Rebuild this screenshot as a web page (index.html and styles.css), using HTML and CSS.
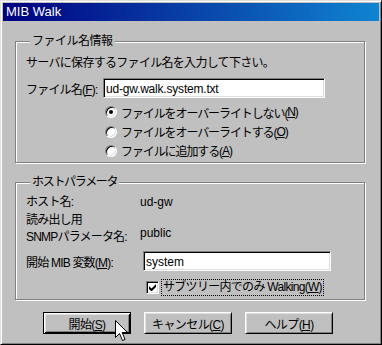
FILE: index.html
```html
<!DOCTYPE html>
<html lang="ja">
<head>
    <meta charset="UTF-8">
    <title>MIB Walk</title>
    <link rel="stylesheet" href="styles.css">
</head>
<body>
    <div class="window">
        <div class="titlebar">MIB Walk</div>
        <div class="dialog">
            <fieldset class="group group-file">
                <legend>ファイル名情報</legend>
                <div class="line">サーバに保存するファイル名を入力して下さい。</div>
                <div class="field">
                    <span class="field-label">ファイル名(<u>F</u>):</span>
                    <div class="textbox tb-file">ud-gw.walk.system.txt</div>
                </div>
                <div class="options">
                    <div class="option"><span class="radio checked"></span>ファイルをオーバーライトしない(<u>N</u>)</div>
                    <div class="option"><span class="radio"></span>ファイルをオーバーライトする(<u>O</u>)</div>
                    <div class="option"><span class="radio"></span>ファイルに追加する(<u>A</u>)</div>
                </div>
            </fieldset>

            <fieldset class="group group-host">
                <legend>ホストパラメータ</legend>
                <div class="info-row">
                    <span class="info-label">ホスト名:</span>
                    <span class="info-value">ud-gw</span>
                </div>
                <div class="info-row two-line">
                    <span class="info-label">読み出し用<br>SNMPパラメータ名:</span>
                    <span class="info-value">public</span>
                </div>
                <div class="field field-mib">
                    <span class="field-label">開始 MIB 変数(<u>M</u>):</span>
                    <div class="textbox tb-mib">system</div>
                </div>
                <div class="check-row">
                    <span class="checkbox">
                        <svg viewBox="0 0 7 7" width="7" height="7"><path d="M0 2v3l2 2h1l4-4V0L2.5 4.5z" fill="#000"/></svg>
                    </span>
                    <span class="focus">サブツリー内でのみ Walking(<u>W</u>)</span>
                </div>
            </fieldset>

            <div class="buttons">
                <div class="btn btn-default">
                    <span>開始(<u>S</u>)</span>
                    <svg class="cursor" viewBox="0 0 13 21" width="13" height="21">
                        <path d="M0.5 0.5V17.5L4.5 13.5L7.5 20.5L10 19.5L7.2 12.5H12.5Z" fill="#fff" stroke="#000" stroke-width="1"/>
                    </svg>
                </div>
                <div class="btn"><span>キャンセル(<u>C</u>)</span></div>
                <div class="btn"><span>ヘルプ(<u>H</u>)</span></div>
            </div>
        </div>
    </div>
</body>
</html>
```

FILE: styles.css
```css
:root {
    --face: #c0c0c0;
    --shadow: #808080;
    --light: #dfdfdf;
    --ui-font: "Liberation Sans", "Noto Sans CJK JP", sans-serif;
}

* {
    margin: 0;
    padding: 0;
    box-sizing: border-box;
}

body {
    font-family: var(--ui-font);
    font-size: 12px;
    color: #000;
    background: var(--face);
}

u {
    text-decoration: underline;
    text-underline-offset: 1px;
}

.window {
    width: 382px;
    height: 345px;
    background: var(--face);
    border: 1px solid;
    border-color: var(--light) #000 #000 var(--light);
    box-shadow: inset 1px 1px #fff, inset -1px -1px var(--shadow);
    padding: 2px;
    display: flex;
    flex-direction: column;
}

.titlebar {
    height: 18px;
    line-height: 18px;
    padding-left: 3px;
    color: #fff;
    font-size: 13px;
    background: linear-gradient(to right, #000080, #1084d0);
}

.dialog {
    padding: 13px 14px 0 12px;
}

/* Gruppenrahmen */
.group {
    width: 350px;
    border: 1px solid var(--shadow);
    box-shadow: inset 1px 1px #fff, 1px 1px #fff;
    padding: 0 0 0 10px;
}

.group legend {
    margin-left: 4px;
    padding: 0 2px 0 2px;
    line-height: 14px;
    height: 14px;
    letter-spacing: -0.5px;
    background: var(--face);
}

.group-host legend {
    letter-spacing: -1.3px;
}

.group-file {
    padding-top: 8px;
    padding-bottom: 2px;
}

.group-host {
    margin-top: 12px;
    padding-top: 6px;
    padding-bottom: 4px;
}

.line {
    line-height: 14px;
    height: 14px;
    letter-spacing: -0.7px;
}

.field {
    display: flex;
    align-items: center;
    margin-top: 8px;
    height: 20px;
}

.field-label {
    width: 77px;
    flex-shrink: 0;
    letter-spacing: -0.8px;
}

.textbox {
    height: 20px;
    line-height: 16px;
    padding-left: 2px;
    background: #fff;
    border: 1px solid;
    border-color: var(--shadow) #fff #fff var(--shadow);
    box-shadow: inset 1px 1px #000, inset -1px -1px var(--light);
    padding-top: 2px;
}

.tb-file {
    width: 222px;
    letter-spacing: -0.2px;
}

.options {
    margin-top: 4px;
    padding-left: 79px;
}

.option {
    display: flex;
    align-items: center;
    height: 19px;
    letter-spacing: -1.1px;
}

.option:first-child {
    height: 20px;
}

.radio {
    width: 12px;
    height: 12px;
    border-radius: 50%;
    background: #fff;
    border: 1px solid;
    border-color: var(--shadow) #fff #fff var(--shadow);
    box-shadow: inset 1px 1px #000, inset -1px -1px var(--light);
    margin-right: 4px;
    display: flex;
    align-items: center;
    justify-content: center;
    flex-shrink: 0;
}

.radio.checked::after {
    content: "";
    width: 4px;
    height: 4px;
    border-radius: 50%;
    background: #000;
}

/* Host-Parameter */
.info-row {
    display: flex;
    line-height: 14px;
}

.info-label {
    width: 114px;
    flex-shrink: 0;
    letter-spacing: -0.8px;
}

.two-line {
    margin-top: 3px;
    line-height: 17px;
}

.two-line .info-value {
    align-self: flex-end;
    padding-bottom: 4px;
}

.field-mib {
    margin-top: 5px;
}

.field-mib .field-label {
    width: 117px;
}

.tb-mib {
    width: 188px;
}

.check-row {
    display: flex;
    align-items: center;
    margin-top: 8px;
    height: 16px;
    padding-left: 120px;
}

.checkbox {
    width: 13px;
    height: 13px;
    background: #fff;
    border: 1px solid;
    border-color: var(--shadow) #fff #fff var(--shadow);
    box-shadow: inset 1px 1px #000, inset -1px -1px var(--light);
    display: flex;
    align-items: center;
    justify-content: center;
    margin-right: 3px;
}

.focus {
    outline: 1px dotted #000;
    padding: 0 1px;
    line-height: 15px;
    letter-spacing: -0.7px;
}

/* Schaltflächen */
.buttons {
    display: flex;
    gap: 13px;
    margin-top: 12px;
    padding-left: 28px;
}

.btn {
    position: relative;
    width: 88px;
    height: 22px;
    display: flex;
    align-items: center;
    justify-content: center;
    border: 1px solid;
    border-color: #fff #000 #000 #fff;
    box-shadow: inset 1px 1px var(--light), inset -1px -1px var(--shadow);
    letter-spacing: -0.6px;
}

.btn-default {
    border: 1px solid #000;
    box-shadow: inset 1px 1px #fff, inset -1px -1px #000, inset 2px 2px var(--light), inset -2px -2px var(--shadow);
}

.cursor {
    position: absolute;
    left: 71px;
    top: 7px;
}
```
